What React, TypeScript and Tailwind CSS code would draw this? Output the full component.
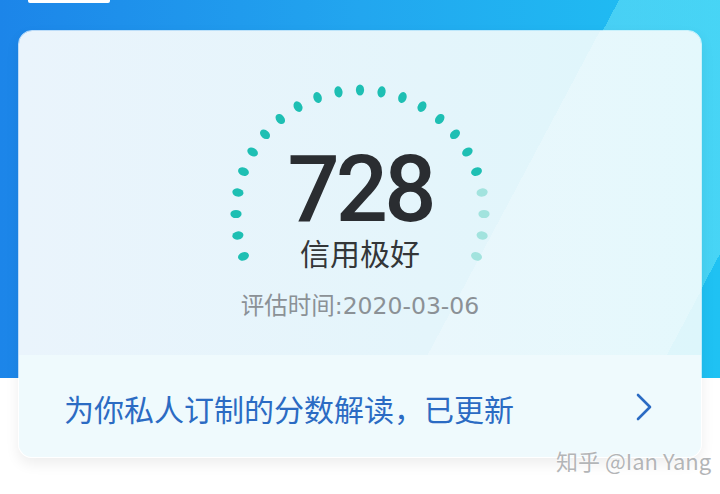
import React from 'react'

const CX = 150
const CY = 150
const R = 124
const TOTAL = 23
const LIT = 19

const dots = Array.from({ length: TOTAL }, (_, i) => {
  const angle = 200 - i * 10
  const rad = (angle * Math.PI) / 180
  return {
    x: CX + R * Math.cos(rad),
    y: CY - R * Math.sin(rad),
    angle,
    lit: i < LIT,
  }
})

function Dial() {
  return (
    <svg width="300" height="240" viewBox="0 0 300 240" className="absolute left-1/2 top-[33px] -translate-x-1/2">
      {dots.map((d, i) => (
        <ellipse
          key={i}
          cx={d.x}
          cy={d.y}
          rx={5.6}
          ry={4.1}
          fill={d.lit ? '#1ebfb3' : '#a2e3de'}
          transform={`rotate(${-d.angle} ${d.x} ${d.y})`}
        />
      ))}
    </svg>
  )
}

export default function App() {
  return (
    <div className="relative w-[720px] h-[494px] overflow-hidden bg-[linear-gradient(to_bottom,transparent_378px,#ffffff_378px),linear-gradient(118deg,transparent_63%,rgba(120,235,248,0.45)_63%,rgba(120,235,248,0.45)_87%,transparent_87%),linear-gradient(to_right,#1c85e9,#22a6ef_50%,#1fc2f3)] font-['Noto_Sans_CJK_SC',sans-serif]">
      {/* cut-off tab above the card */}
      <div className="ml-[28px] w-[82px] h-[3px] bg-white rounded-b-[2px]" />

      {/* card */}
      <div className="mx-[18px] mt-[27px] h-[428px] rounded-[14px] overflow-hidden border border-white/70 shadow-[0_6px_14px_rgba(0,0,0,0.07)] flex flex-col">
        {/* score section */}
        <div className="relative h-[324px] flex flex-col items-center pt-[113px] bg-[linear-gradient(118deg,transparent_68%,rgba(255,255,255,0.22)_68%,rgba(255,255,255,0.22)_96%,transparent_96%),linear-gradient(to_right,#eaf4fc,#e4f5fb_60%,#ddf6fb)]">
          <Dial />
          <div className="relative text-[92px] leading-none font-medium tracking-[-4px] text-[#2a2d31] font-['Roboto',sans-serif]">
            728
          </div>
          <div className="relative mt-[1px] text-[30px] leading-[30px] text-[#333638]">信用极好</div>
          <div className="relative mt-[27px] text-[23.5px] leading-[24px] text-[#8b9196] font-['DejaVu_Sans','Noto_Sans_CJK_SC',sans-serif]">
            评估时间:2020-03-06
          </div>
        </div>

        {/* interpretation row */}
        <div className="flex-1 flex items-center justify-between pl-[45px] pr-[48px] bg-[#effafd] shadow-[0_-3px_6px_rgba(120,170,200,0.12)]">
          <span className="text-[30px] leading-[30px] text-[#2b6bc3] pt-[3px]">为你私人订制的分数解读，已更新</span>
          <svg width="18" height="28" viewBox="0 0 18 28" className="mt-[2px]">
            <polyline points="3,2 15,14 3,26" fill="none" stroke="#2b6bc3" strokeWidth="2.6" strokeLinecap="round" strokeLinejoin="round" />
          </svg>
        </div>
      </div>

      {/* watermark */}
      <div className="absolute left-[556px] top-[447px] text-[22px] leading-[26px] text-[#b3b5b7] [text-shadow:0_0_2px_#fff,0_0_2px_#fff] font-['Noto_Sans_CJK_SC',sans-serif] whitespace-nowrap">
        知乎 @Ian Yang
      </div>
    </div>
  )
}
